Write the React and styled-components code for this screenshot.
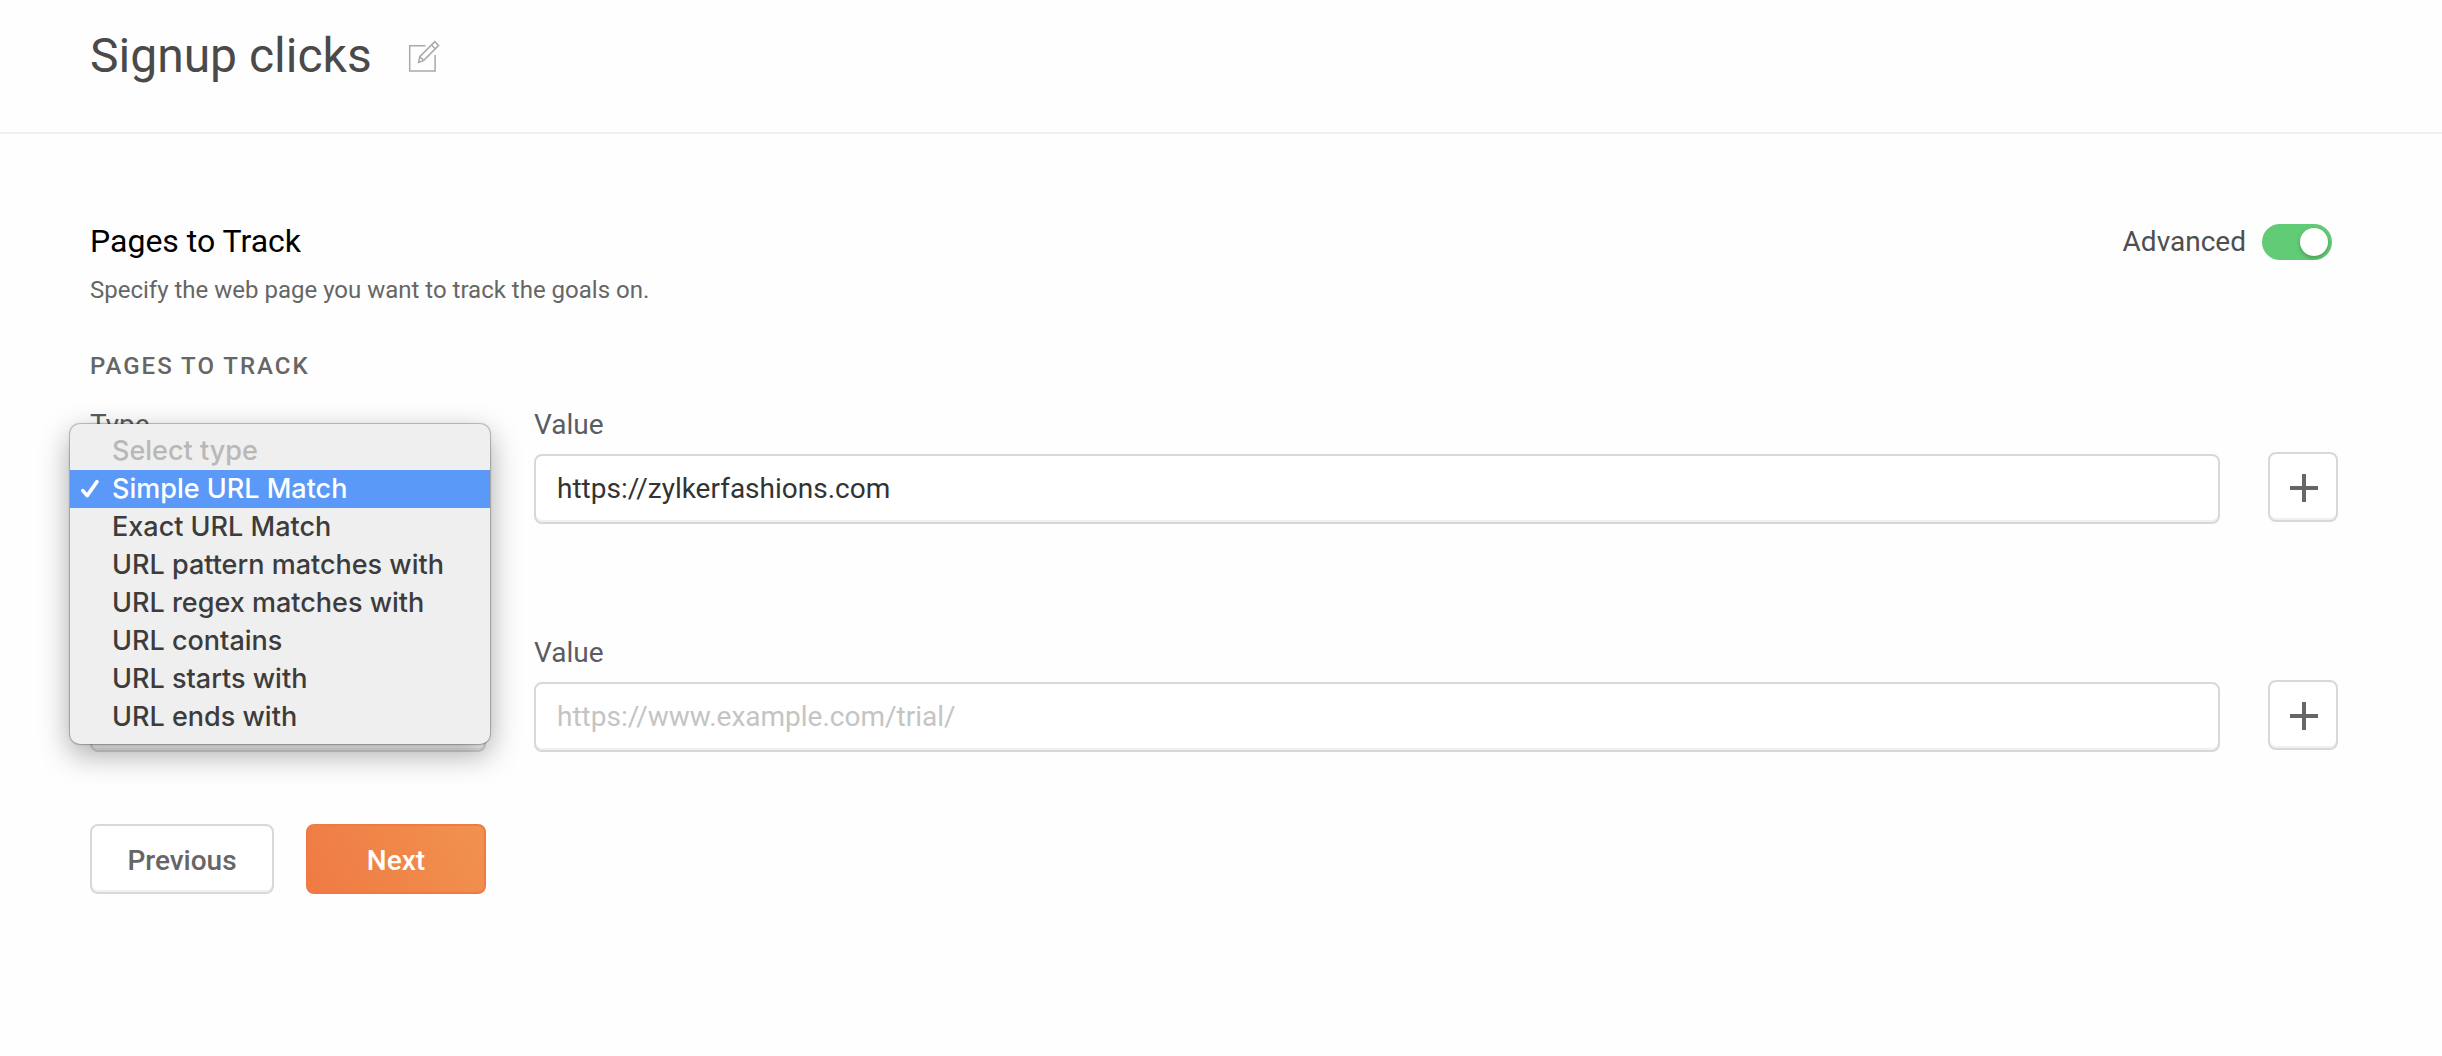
import React, { useState } from 'react';
import styled, { createGlobalStyle } from 'styled-components';

const types = [
  'Simple URL Match',
  'Exact URL Match',
  'URL pattern matches with',
  'URL regex matches with',
  'URL contains',
  'URL starts with',
  'URL ends with',
];

const EditIcon = () => (
  <svg width="32" height="32" viewBox="0 0 32 32" fill="none" stroke="#a9a9a9" strokeWidth="1.5">
    <path d="M17.5 5.7H1.7v25.4h25.4V15" />
    <path d="M10.6 22.4l1.2-5.8L26.8 1.6l3.8 3.8-15 15.2-5 1.8z" />
    <path d="M11.8 16.8l3.8 3.6M23.4 5l3.8 3.8" />
  </svg>
);

const PlusIcon = () => (
  <svg width="28" height="28" viewBox="0 0 28 28" stroke="#666" strokeWidth="4">
    <path d="M14 0v28M0 14h28" />
  </svg>
);

const CheckIcon = () => (
  <svg width="20" height="20" viewBox="0 0 20 20" fill="none" stroke="currentColor" strokeWidth="3.6" strokeLinecap="round" strokeLinejoin="round">
    <path d="M2.8 11.6l4.4 5L17 2.6" />
  </svg>
);

const App = () => {
  const [advanced, setAdvanced] = useState(true);
  const [type, setType] = useState(types[0]);
  const [url, setUrl] = useState('https://zylkerfashions.com');
  const [open, setOpen] = useState(true);

  const pick = (name) => {
    setType(name);
    setOpen(false);
  };

  return (
    <>
      <GlobalStyle />
      <Header>
        <Title>Signup clicks</Title>
        <IconButton type="button" aria-label="Edit name">
          <EditIcon />
        </IconButton>
      </Header>
      <Main>
        <TopRow>
          <Heading>Pages to Track</Heading>
          <Advanced>
            Advanced
            <Switch
              type="checkbox"
              checked={advanced}
              onChange={(e) => setAdvanced(e.target.checked)}
            />
          </Advanced>
        </TopRow>
        <Description>Specify the web page you want to track the goals on.</Description>
        <SectionTitle>PAGES TO TRACK</SectionTitle>

        <Rules>
          <Rule>
            <TypeField>
              <Label htmlFor="type-1">Type</Label>
              <SelectBox>
                <Select id="type-1" value={type} onChange={(e) => setType(e.target.value)}>
                  {types.map((name) => <option key={name}>{name}</option>)}
                </Select>
                {open && (
                  <Menu role="listbox" aria-label="Type">
                    <Option type="button" role="option" aria-selected={false} disabled>
                      <Tick />
                      Select type
                    </Option>
                    {types.map((name) => (
                      <Option
                        key={name}
                        type="button"
                        role="option"
                        aria-selected={name === type}
                        $active={name === type}
                        onClick={() => pick(name)}
                      >
                        <Tick>{name === type && <CheckIcon />}</Tick>
                        {name}
                      </Option>
                    ))}
                  </Menu>
                )}
              </SelectBox>
            </TypeField>
            <ValueField>
              <Label htmlFor="value-1">Value</Label>
              <Input id="value-1" type="text" value={url} onChange={(e) => setUrl(e.target.value)} />
            </ValueField>
            <AddButton type="button" aria-label="Add page">
              <PlusIcon />
            </AddButton>
          </Rule>

          <Rule>
            <TypeField>
              <Label htmlFor="type-2">Type</Label>
              <SelectBox>
                <Select id="type-2" defaultValue={types[0]}>
                  {types.map((name) => <option key={name}>{name}</option>)}
                </Select>
              </SelectBox>
            </TypeField>
            <ValueField>
              <Label htmlFor="value-2">Value</Label>
              <Input id="value-2" type="text" placeholder="https://www.example.com/trial/" />
            </ValueField>
            <AddButton type="button" aria-label="Add page">
              <PlusIcon />
            </AddButton>
          </Rule>
        </Rules>

        <Actions>
          <PreviousButton type="button">Previous</PreviousButton>
          <NextButton type="button">Next</NextButton>
        </Actions>
      </Main>
    </>
  );
};

export default App;

const GlobalStyle = createGlobalStyle`
  * {
    box-sizing: border-box;
  }
  body {
    margin: 0;
    background: #fefefe;
    font-family: Roboto, "Liberation Sans", sans-serif;
  }
  button, input, select {
    font-family: inherit;
  }
`;

const Header = styled.header`
  display: flex;
  align-items: center;
  gap: 36px;
  padding: 28px 104px 48px 90px;
  border-bottom: 2px solid #f0f0f0;
`;

const Title = styled.h1`
  margin: 0;
  font-size: 48px;
  line-height: 56px;
  font-weight: 400;
  color: #4a4a4a;
`;

const IconButton = styled.button`
  display: flex;
  padding: 0;
  border: 0;
  background: none;
  cursor: pointer;
`;

const Main = styled.main`
  padding: 88px 104px 88px 90px;
`;

const TopRow = styled.div`
  display: flex;
  justify-content: space-between;
  align-items: center;
`;

const Heading = styled.h2`
  margin: 0;
  font-size: 32px;
  line-height: 38px;
  font-weight: 400;
  color: #000;
`;

const Advanced = styled.label`
  display: flex;
  align-items: center;
  gap: 16px;
  padding: 2px 6px 0 0;
  font-size: 28px;
  line-height: 32px;
  color: #4f4f4f;
  cursor: pointer;
`;

const Switch = styled.input`
  appearance: none;
  display: flex;
  width: 70px;
  height: 36px;
  margin: 0;
  padding: 4px;
  border-radius: 18px;
  background: #c8c8c8;
  cursor: pointer;

  &::before {
    content: '';
    width: 28px;
    height: 28px;
    border-radius: 50%;
    background: #fff;
    box-shadow: 0 2px 4px rgba(0, 0, 0, 0.25);
  }
  &:checked {
    justify-content: flex-end;
    background: #62cb75;
  }
`;

const Description = styled.p`
  margin: 16px 0 0;
  font-size: 24px;
  line-height: 28px;
  color: #666;
`;

const SectionTitle = styled.h3`
  margin: 48px 0 28px;
  font-size: 24px;
  line-height: 28px;
  font-weight: 500;
  letter-spacing: 2px;
  color: #666;
`;

const Rules = styled.div`
  display: flex;
  flex-direction: column;
  gap: 112px;
`;

const Rule = styled.div`
  display: flex;
  align-items: flex-end;
  gap: 48px;
`;

const Field = styled.div`
  display: flex;
  flex-direction: column;
  gap: 12px;
`;

const TypeField = styled(Field)`
  flex: none;
  width: 396px;
`;

const ValueField = styled(Field)`
  flex: 1;
  min-width: 0;
`;

const Label = styled.label`
  font-size: 28px;
  line-height: 34px;
  color: #5a5c64;
`;

const SelectBox = styled.div`
  position: relative;
`;

const Select = styled.select`
  appearance: none;
  display: block;
  width: 100%;
  height: 70px;
  padding: 0 21px;
  border: 2px solid #d8d8d8;
  border-radius: 8px;
  background: #fff;
  box-shadow: inset 0 -2px 0 #f0f0f0;
  font-size: 28px;
  color: #333;
`;

const Input = styled.input`
  width: 100%;
  height: 70px;
  padding: 0 21px 2px;
  border: 2px solid #d8d8d8;
  border-radius: 8px;
  background: #fff;
  box-shadow: inset 0 -2px 0 #f0f0f0;
  font-size: 28px;
  color: #333;

  &::placeholder {
    color: #c4c4c4;
  }
`;

/* the menu opens over the select, a bit wider on the left */
const Menu = styled.div`
  position: absolute;
  top: -30px;
  left: -20px;
  z-index: 1;
  width: 420px;
  padding: 8px 0;
  border-radius: 10px;
  background: #efefef;
  box-shadow: 0 0 1px 1px rgba(0, 0, 0, 0.25), 0 10px 30px rgba(0, 0, 0, 0.35);
`;

const Option = styled.button`
  display: flex;
  align-items: center;
  width: 100%;
  height: 38px;
  padding: 0 10px;
  border: 0;
  background: ${(props) => (props.$active ? '#5b99f8' : 'transparent')};
  font-family: Inter, Roboto, sans-serif;
  font-size: 27px;
  font-weight: 500;
  line-height: 38px;
  text-align: left;
  white-space: nowrap;
  color: ${(props) => (props.$active ? '#fff' : '#3c3c3c')};

  &:disabled {
    color: #b8b8b8;
  }
`;

const Tick = styled.span`
  display: flex;
  flex: none;
  width: 32px;
`;

const AddButton = styled.button`
  display: flex;
  flex: none;
  align-items: center;
  justify-content: center;
  width: 70px;
  height: 70px;
  margin-bottom: 2px;
  padding: 2px 0 0 2px;
  border: 2px solid #d8d8d8;
  border-radius: 8px;
  background: #fff;
  box-shadow: inset 0 -2px 0 #f0f0f0;
  cursor: pointer;
`;

const Actions = styled.div`
  display: flex;
  gap: 32px;
  margin-top: 72px;
`;

const Button = styled.button`
  height: 70px;
  padding: 2px 0 0;
  border-radius: 8px;
  font-size: 28px;
  font-weight: 500;
  cursor: pointer;
`;

const PreviousButton = styled(Button)`
  width: 184px;
  border: 2px solid #d8d8d8;
  background: #fff;
  box-shadow: inset 0 -2px 0 #f0f0f0;
  color: #666;
`;

const NextButton = styled(Button)`
  width: 180px;
  border: 2px solid #ef7a43;
  background: linear-gradient(60deg, #ef7a43, #f1924f);
  color: #fff;
`;
